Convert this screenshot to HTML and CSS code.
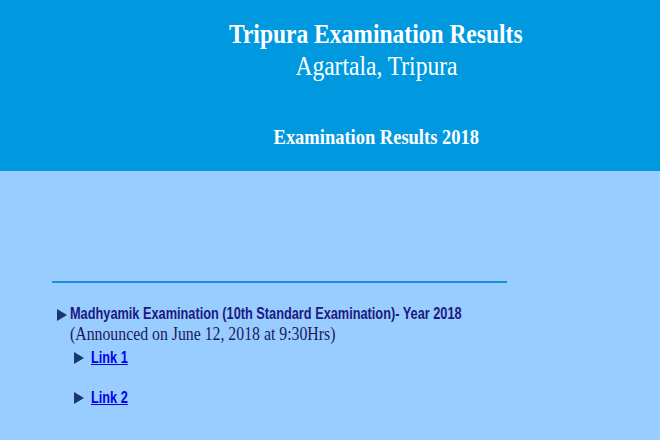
FILE: index.html
```html
<!DOCTYPE html>
<html lang="en">
<head>
  <meta charset="UTF-8" />
  <title>Tripura Examination Results</title>
  <link rel="stylesheet" href="styles.css">
</head>
<body>

  <div class="header">
    <h1><span class="squeeze">Tripura Examination Results</span></h1>
    <p class="place"><span class="squeeze">Agartala, Tripura</span></p>
    <h2><span class="squeeze">Examination Results 2018</span></h2>
  </div>

  <div class="content">
    <hr class="rule" />

    <div class="exam">
      <span class="arrow"></span>
      <div>
        <p class="exam-title"><span class="narrow">Madhyamik Examination (10th Standard Examination)- Year 2018</span></p>
        <p class="announced"><span class="squeeze-left">(Announced on June 12, 2018 at 9:30Hrs)</span></p>
      </div>
    </div>

    <ul class="links">
      <li><span class="arrow"></span><a href="#" class="narrow">Link 1</a></li>
      <li><span class="arrow"></span><a href="#" class="narrow">Link 2</a></li>
    </ul>
  </div>

</body>
</html>
```

FILE: styles.css
```css
body {
  margin: 0;
  background-color: #99ccff;
  font-family: "Liberation Serif", "Times New Roman", serif;
}
/* the old page renders its fonts condensed */
.squeeze {
  display: inline-block;
  transform: scaleX(0.84);
}
.squeeze-left {
  display: inline-block;
  transform: scaleX(0.81);
  transform-origin: left center;
  white-space: nowrap;
}
.narrow {
  display: inline-block;
  transform: scaleX(0.75);
  transform-origin: left center;
  white-space: nowrap;
}
.header {
  height: 171px;
  box-sizing: border-box;
  padding: 18px 0 0 92px;
  background-color: #0099e0;
  color: #fff;
  text-align: center;
}
.header h1 {
  margin: 0;
  font-size: 28px;
  line-height: 32px;
}
.place {
  margin: 0;
  font-size: 28px;
  line-height: 32px;
}
.header h2 {
  margin: 42px 0 0;
  font-size: 22px;
  line-height: 26px;
}
.content {
  padding: 110px 0 0 52px;
}
.rule {
  width: 455px;
  margin: 0;
  height: 2px;
  border: none;
  background-color: #1a8fd6;
}
.arrow {
  display: inline-block;
  flex-shrink: 0;
  width: 0;
  height: 0;
  border-top: 6px solid transparent;
  border-bottom: 6px solid transparent;
  border-left: 10px solid #173a68;
}
.exam {
  display: flex;
  gap: 3px;
  margin-top: 21px;
  padding-left: 5px;
}
.exam .arrow {
  margin-top: 5px;
}
.exam-title {
  margin: 0;
  font-family: "Liberation Sans", Arial, sans-serif;
  font-weight: bold;
  font-size: 17px;
  line-height: 20px;
  color: #1a1a80;
}
.announced {
  margin: 0;
  font-size: 19.5px;
  line-height: 19px;
  color: #1a1a60;
}
.links {
  list-style: none;
  margin: 5px 0 0;
  padding-left: 22px;
}
.links li {
  display: flex;
  align-items: center;
  gap: 7px;
  height: 20px;
  margin-bottom: 20px;
}
.links a {
  font-family: "Liberation Sans", Arial, sans-serif;
  font-weight: bold;
  font-size: 17px;
  color: #0000ee;
}
```
